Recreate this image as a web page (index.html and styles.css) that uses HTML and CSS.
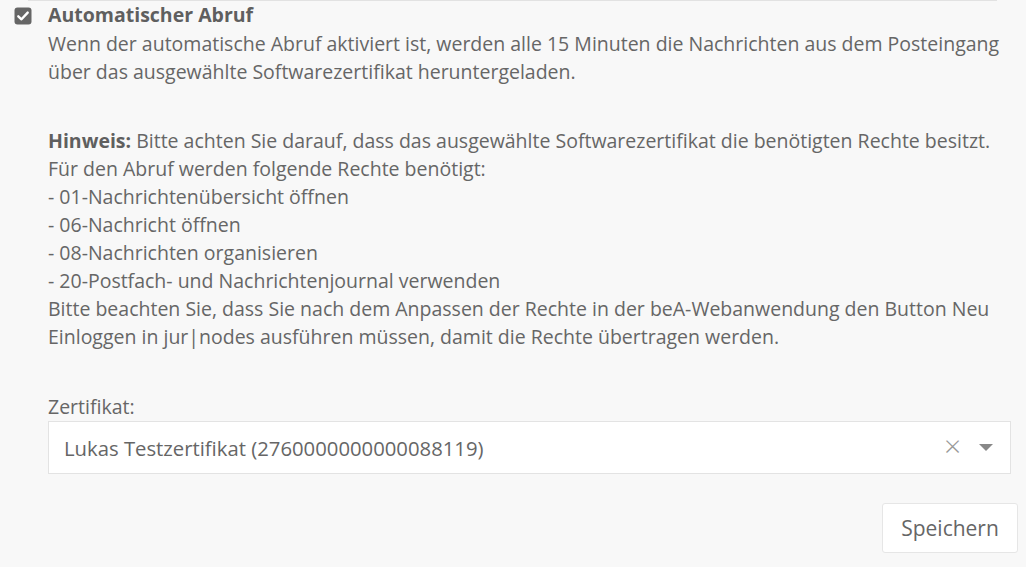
FILE: index.html
```html
<!DOCTYPE html>
<html lang="de">
<head>
<meta charset="utf-8">
<link rel="stylesheet" href="styles.css">
</head>
<body>
<div class="panel">
  <div class="topline"></div>
  <div class="option">
    <span class="checkbox">
      <svg width="18" height="18" viewBox="0 0 18 18"><rect x="0.5" y="0.5" width="17" height="17" rx="3" fill="#666"/><path d="M4.3 9.3 L7.5 12.3 L13.7 5.6" fill="none" stroke="#fff" stroke-width="2.4" stroke-linecap="round" stroke-linejoin="round"/></svg>
    </span>
    <div class="content">
      <div class="title">Automatischer Abruf</div>
      <p class="desc">Wenn der automatische Abruf aktiviert ist, werden alle 15 Minuten die Nachrichten aus dem Posteingang über das ausgewählte Softwarezertifikat heruntergeladen.</p>
      <p class="note"><b>Hinweis:</b> Bitte achten Sie darauf, dass das ausgewählte Softwarezertifikat die benötigten Rechte besitzt.<br>Für den Abruf werden folgende Rechte benötigt:<br>- 01-Nachrichtenübersicht öffnen<br>- 06-Nachricht öffnen<br>- 08-Nachrichten organisieren<br>- 20-Postfach- und Nachrichtenjournal verwenden<br>Bitte beachten Sie, dass Sie nach dem Anpassen der Rechte in der beA-Webanwendung den Button Neu Einloggen in jur|nodes ausführen müssen, damit die Rechte übertragen werden.</p>
      <label class="label">Zertifikat:</label>
      <div class="select">
        <span class="value">Lukas Testzertifikat (2760000000000088119)</span>
        <span class="clear">×</span>
        <span class="arrow"></span>
      </div>
    </div>
  </div>
  <div class="actions">
    <button class="btn">Speichern</button>
  </div>
</div>
</body>
</html>
```
FILE: styles.css
```css
html, body {
  margin: 0;
  padding: 0;
  background: #f8f8f8;
}
body {
  font-family: "Open Sans", "Liberation Sans", sans-serif;
  font-size: 19.5px;
  line-height: 28px;
  color: #666;
  width: 1026px;
  height: 567px;
  overflow: hidden;
}
.panel {
  padding: 0 8px 0 14px;
}
.topline {
  height: 1px;
  background: #e2e2e2;
  margin-left: 14px;
  margin-right: 21px;
}
.option {
  display: flex;
  gap: 16px;
}
.checkbox {
  width: 18px;
  height: 18px;
  margin-top: 6px;
  flex: none;
}
.checkbox svg { display: block; }
.content {
  flex: 1;
  padding-right: 7px;
}
.title {
  font-weight: 700;
  color: #5f5f5f;
  line-height: 28px;
}
.desc {
  margin: 1px 0 0;
}
.note {
  margin: 41px 0 0;
}
.note b { color: #5f5f5f; }
.label {
  display: block;
  margin-top: 42px;
}
.select {
  margin-top: 0;
  height: 53px;
  box-sizing: border-box;
  border: 1px solid #e3e3e3;
  background: #fff;
  display: flex;
  align-items: center;
  padding: 0 17px 0 15px;
}
.value {
  flex: 1;
  font-size: 20.3px;
}
.clear {
  color: #999;
  font-size: 30px;
  margin-right: 18px;
  font-weight: 300;
  line-height: 28px;
  margin-top: -4px;
}
.arrow {
  width: 0;
  height: 0;
  border-left: 7px solid transparent;
  border-right: 7px solid transparent;
  border-top: 7px solid #888;
}
.actions {
  display: flex;
  justify-content: flex-end;
  margin-top: 29px;
}
.btn {
  font-family: inherit;
  font-size: 21px;
  color: #666;
  background: #fff;
  border: 1px solid #e6e6e6;
  border-radius: 3px;
  width: 136px;
  height: 50px;
  padding: 0;
}
```
